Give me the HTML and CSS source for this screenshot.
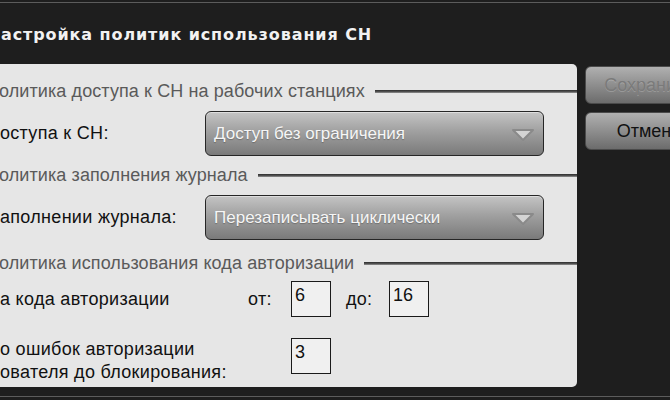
FILE: index.html
```html
<!DOCTYPE html>
<html>
<head>
    <meta charset="UTF-8">
    <title>Настройка политик использования СН</title>
    <link rel="stylesheet" href="styles.css">
</head>
<body>
    <div class="frame">
        <div class="title">астройка политик использования СН</div>
        <div class="main">
            <div class="panel">
                <div class="group-title g1"><span>олитика доступа к СН на рабочих станциях</span><i></i></div>
                <div class="row r1">
                    <div class="label">оступа к СН:</div>
                    <div class="combo">
                        <span>Доступ без ограничения</span>
                        <svg width="24" height="14" viewBox="0 0 24 14"><path d="M2 2 H22 L12 12 Z" fill="#d4d4d4" stroke="#8a8a8a" stroke-width="2" stroke-linejoin="round"/></svg>
                    </div>
                </div>
                <div class="group-title g2"><span>олитика заполнения журнала</span><i></i></div>
                <div class="row r2">
                    <div class="label">аполнении журнала:</div>
                    <div class="combo">
                        <span>Перезаписывать циклически</span>
                        <svg width="24" height="14" viewBox="0 0 24 14"><path d="M2 2 H22 L12 12 Z" fill="#d4d4d4" stroke="#8a8a8a" stroke-width="2" stroke-linejoin="round"/></svg>
                    </div>
                </div>
                <div class="group-title g3"><span>олитика использования кода авторизации</span><i></i></div>
                <div class="row r3">
                    <div class="label wide">а кода авторизации</div>
                    <div class="small-label">от:</div>
                    <div class="num">6</div>
                    <div class="small-label to">до:</div>
                    <div class="num">16</div>
                </div>
                <div class="row r4">
                    <div class="label wider">о ошибок авторизации<br>ователя до блокирования:</div>
                    <div class="num">3</div>
                </div>
            </div>
            <div class="buttons">
                <button class="btn disabled">Сохранить</button>
                <button class="btn">Отмена</button>
            </div>
        </div>
        <div class="bottom-line"></div>
    </div>
</body>
</html>
```

FILE: styles.css
```css
html, body {
    margin: 0;
    height: 100%;
}
body {
    background-color: #1e1e1e;
    overflow: hidden;
    font-family: "Liberation Sans", Arial, sans-serif;
    color: #111;
}
.frame {
    width: 670px;
    height: 400px;
    padding-top: 2px;
    box-sizing: border-box;
    overflow: hidden;
}
.frame:before {
    content: "";
    display: block;
    height: 1px;
    background-color: #5c5c5c;
}
.title {
    height: 61px;
    padding-left: 1px;
    padding-top: 22px;
    box-sizing: border-box;
    font-family: "DejaVu Sans", sans-serif;
    font-weight: bold;
    font-size: 16px;
    color: #f2f2f2;
    letter-spacing: 0.9px;
}
.main {
    display: flex;
    gap: 8px;
}
.panel {
    flex-shrink: 0;
    width: 577px;
    height: 323px;
    background-color: #e6e6e6;
    border-radius: 0 5px 5px 0;
    box-sizing: border-box;
    padding-top: 16px;
}
.group-title {
    display: flex;
    align-items: center;
    height: 22px;
    font-size: 18px;
    letter-spacing: 0.1px;
    color: #5a5a5a;
    margin-left: -1px;
}
.group-title i {
    flex: 1;
    height: 3px;
    margin-left: 10px;
    background: linear-gradient(#2c2c2c, #555 60%, #999);
}
.g2 { margin-top: 8px; }
.g3 { margin-top: 12px; }
.row {
    display: flex;
    align-items: center;
    font-size: 18px;
    letter-spacing: 0.3px;
}
.r1 { margin-top: 9px; }
.r2 { margin-top: 9px; }
.r3 { margin-top: 7px; }
.r4 { margin-top: 21px; }
.label {
    width: 205px;
}
.label.wide { width: 248px; }
.label.wider { width: 291px; line-height: 23px; }
.combo {
    width: 339px;
    height: 45px;
    box-sizing: border-box;
    border: 1.5px solid #262626;
    border-radius: 6px;
    background: linear-gradient(#c4c4c4, #a0a0a0 45%, #7a7a7a);
    box-shadow: inset 0 1px 0 rgba(255, 255, 255, 0.45);
    display: flex;
    align-items: center;
    justify-content: space-between;
    padding: 0 8px 0 8px;
    color: #f6f6f6;
    font-size: 17px;
    letter-spacing: 0;
    text-shadow: 0 1px 1px rgba(0, 0, 0, 0.25);
}
.combo svg {
    margin-top: 2px;
}
.small-label {
    width: 43px;
}
.small-label.to {
    margin-left: 15px;
}
.num {
    width: 40px;
    height: 36px;
    box-sizing: border-box;
    border: 1.5px solid #1a1a1a;
    background-color: #f0f0f0;
    padding: 3px 0 0 3px;
    font-size: 18px;
    letter-spacing: 0;
    align-self: flex-start;
}
.buttons {
    display: flex;
    flex-direction: column;
    gap: 8px;
    padding-top: 2px;
}
.btn {
    width: 128px;
    height: 38px;
    border: 1px solid #4a4a4a;
    border-radius: 6px;
    background: linear-gradient(#b0b0b0, #8e8e8e 50%, #6c6c6c);
    font-family: "Liberation Sans", Arial, sans-serif;
    font-size: 18px;
    color: #111;
    padding: 0;
    text-align: center;
}
.btn.disabled {
    color: #7a7a7a;
    text-shadow: 0 1px 0 rgba(255, 255, 255, 0.2);
}
.bottom-line {
    height: 1px;
    margin-top: 9px;
    background-color: #5c5c5c;
}
```
